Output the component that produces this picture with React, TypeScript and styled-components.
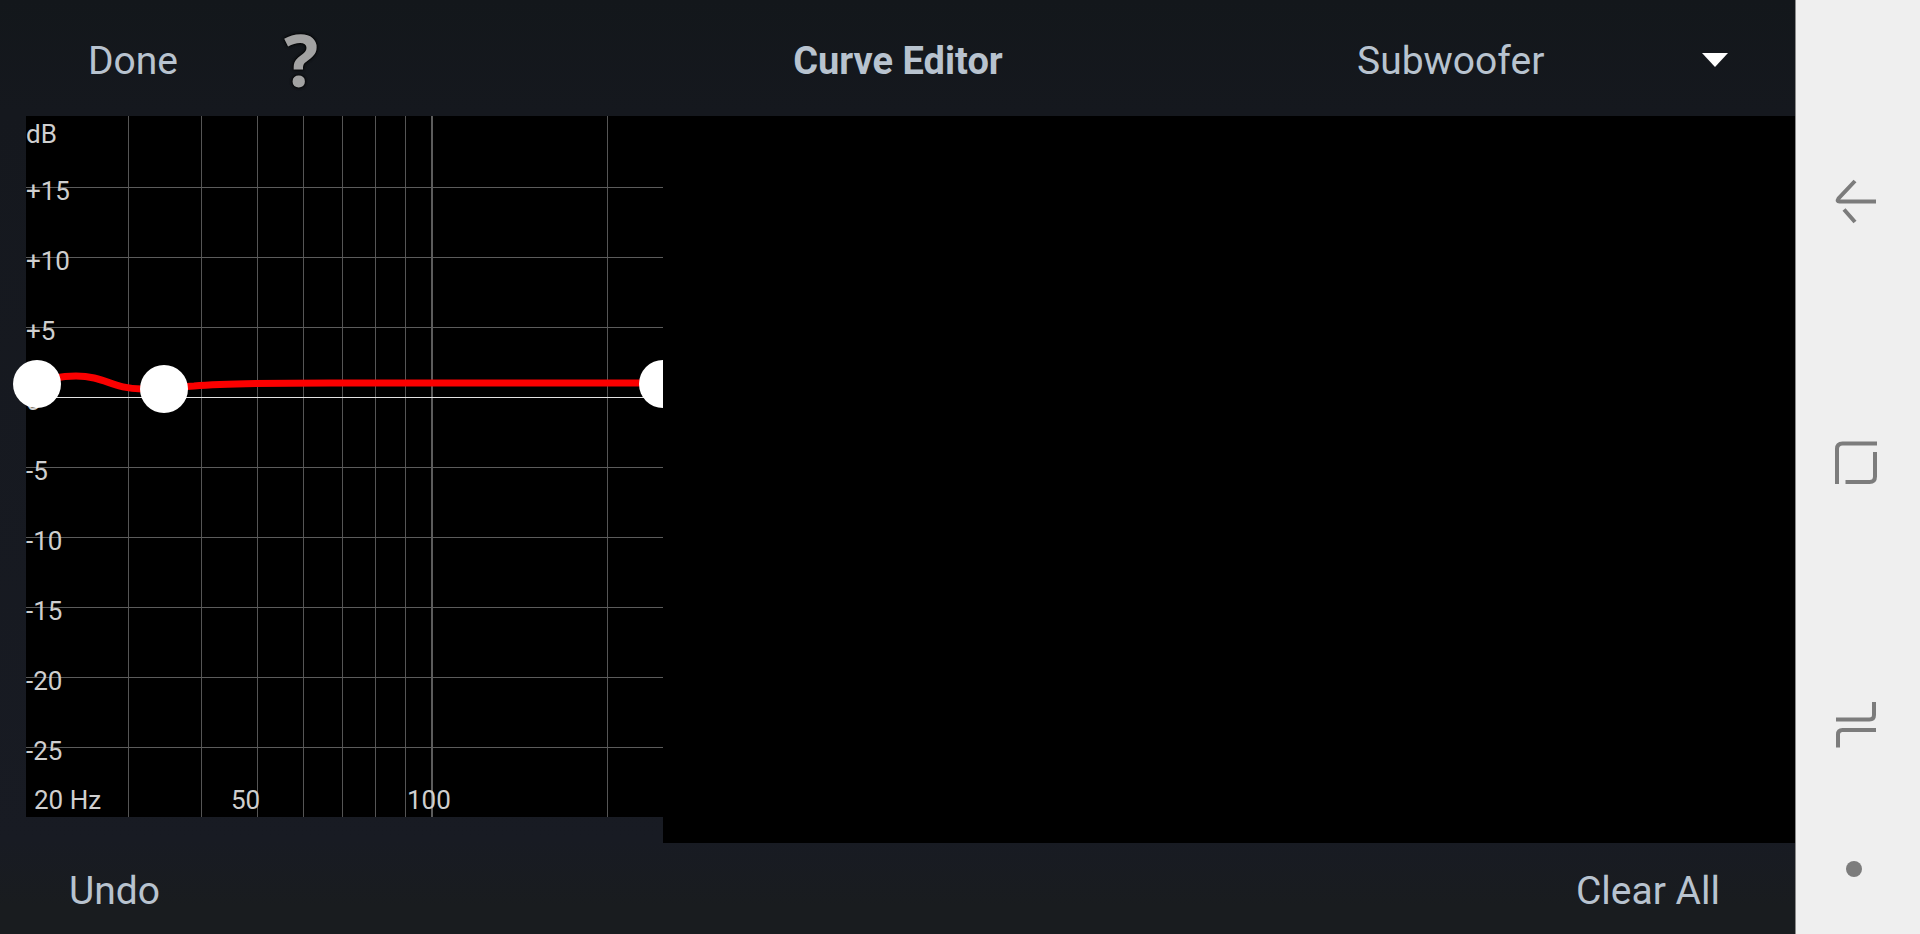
import React, { useState } from "react";
import styled, { createGlobalStyle } from "styled-components";

const GlobalStyle = createGlobalStyle`
  * { box-sizing: border-box; }
  body {
    margin: 0;
    background: #000;
    font-family: Roboto, "Liberation Sans", sans-serif;
  }
`;

const Screen = styled.div`
  display: flex;
  min-height: 100vh;
`;

const Editor = styled.div`
  flex: 1;
  min-width: 0;
  display: flex;
  flex-direction: column;
  background: linear-gradient(#13171b, #15181e 12%, #181b23 90%, #191c1f 97%);
`;

const TopBar = styled.header`
  height: 116px;
  padding: 5px 67px 0 88px;
  display: grid;
  grid-template-columns: 1fr auto 1fr;
  align-items: center;
`;

const BarSide = styled.div<{ $end?: boolean }>`
  display: flex;
  align-items: center;
  justify-content: ${(p) => (p.$end ? "flex-end" : "flex-start")};
`;

const TextButton = styled.button`
  padding: 0;
  border: 0;
  background: none;
  color: #b8c3cf;
  font: 400 39px/48px Roboto, "Liberation Sans", sans-serif;
  cursor: pointer;
`;

const HelpButton = styled(TextButton)`
  margin-left: 106px;
  padding-bottom: 4px;
  color: #a2a2a2;
  font: 700 72px/72px "Open Sans", "Noto Sans", sans-serif;
  text-shadow: 0 0 3px #000, 0 0 3px #000;
`;

const Title = styled.h1`
  margin: 0 0 0 -20px;
  color: #b8c3cf;
  font-size: 38px;
  line-height: 48px;
  font-weight: 700;
`;

const SelectBox = styled.div`
  position: relative;
  width: 371px;
`;

const ChannelSelect = styled.select`
  appearance: none;
  display: block;
  width: 100%;
  padding: 0;
  border: 0;
  background: none;
  color: #b8c3cf;
  font: 400 39px/48px Roboto, "Liberation Sans", sans-serif;
`;

const Caret = styled.svg`
  position: absolute;
  right: 0;
  top: 16px;
  pointer-events: none;
`;

const Workspace = styled.main`
  flex: 1;
  display: flex;
`;

const PlotColumn = styled.div`
  width: 663px;
  padding-bottom: 26px;
`;

const Plot = styled.svg`
  display: block;
  font-size: 26px;
`;

const EmptyArea = styled.div`
  flex: 1;
  background: #000;
`;

const BottomBar = styled.footer`
  height: 91px;
  padding: 4px 75px 0 69px;
  display: flex;
  align-items: center;
  justify-content: space-between;
`;

const SystemNav = styled.nav`
  width: 125px;
  padding: 70px 0 52px;
  display: flex;
  flex-direction: column;
  background: #efefef;
  border-left: 1px solid #8b8b8b;
`;

const NavButton = styled.button<{ $small?: boolean }>`
  flex: ${(p) => (p.$small ? "0 0 26px" : "1")};
  padding: 0 4px 0 0;
  border: 0;
  background: none;
  display: flex;
  align-items: center;
  justify-content: center;
  color: #7c7c7c;
`;

const LEFT = 26;
const RIGHT = 663;
const levels = ["+15", "+10", "+5", "0", "-5", "-10", "-15", "-20", "-25"];
const frequencies = [128, 201, 257, 303, 342, 375, 405, 607];
const handles = [
  { x: 37, y: 268 },
  { x: 164, y: 273 },
  { x: 663, y: 268 },
];

function CurvePlot() {
  return (
    <Plot width="663" height="701" viewBox="0 0 663 701" role="img" aria-label="Target curve">
      <rect x={LEFT} width={RIGHT - LEFT} height="701" fill="#000" />
      <g shapeRendering="crispEdges">
        {frequencies.map((x) => (
          <rect key={x} x={x} width="1" height="701" fill="#555" />
        ))}
        <rect x="431" width="2" height="701" fill="#5c5c5c" />
        {levels.map((label, i) => (
          <rect
            key={label}
            x={LEFT}
            y={71 + i * 70}
            width={RIGHT - LEFT}
            height="1"
            fill={label === "0" ? "#e4e4e4" : "#5c5c5c"}
          />
        ))}
      </g>
      <g fill="#cfcfcf">
        <text x={LEFT} y="27">dB</text>
        {levels.map((label, i) => (
          <text key={label} x={LEFT} y={84 + i * 70}>{label}</text>
        ))}
        <text x="34" y="693">20 Hz</text>
        <text x="231" y="693">50</text>
        <text x="407" y="693">100</text>
      </g>
      <path
        d="M37 268C49 262 62 260 76 260C105 260 112 273 142 273C160 273 176 271 194 270C230 267 275 267 330 267C430 266 530 267 663 267"
        fill="none"
        stroke="#fb0000"
        strokeWidth="7"
      />
      {handles.map((h) => (
        <circle key={h.x} cx={h.x} cy={h.y} r="24" fill="#fff" />
      ))}
    </Plot>
  );
}

function NavIcon({ d }: { d: string }) {
  return (
    <svg width="48" height="48" viewBox="0 0 48 48" fill="none" stroke="currentColor" strokeWidth="4">
      <path d={d} />
    </svg>
  );
}

export default function App() {
  const [channel, setChannel] = useState("Subwoofer");
  return (
    <>
      <GlobalStyle />
      <Screen>
        <Editor>
          <TopBar>
            <BarSide>
              <TextButton type="button">Done</TextButton>
              <HelpButton type="button" aria-label="Help">?</HelpButton>
            </BarSide>
            <Title>Curve Editor</Title>
            <BarSide $end>
              <SelectBox>
                <ChannelSelect
                  aria-label="Channel"
                  value={channel}
                  onChange={(e) => setChannel(e.target.value)}
                >
                  <option>Subwoofer</option>
                </ChannelSelect>
                <Caret width="26" height="14" viewBox="0 0 26 14" aria-hidden="true">
                  <path d="M0 0H26L13 14Z" fill="#fff" />
                </Caret>
              </SelectBox>
            </BarSide>
          </TopBar>
          <Workspace>
            <PlotColumn>
              <CurvePlot />
            </PlotColumn>
            <EmptyArea />
          </Workspace>
          <BottomBar>
            <TextButton type="button">Undo</TextButton>
            <TextButton type="button">Clear All</TextButton>
          </BottomBar>
        </Editor>
        <SystemNav aria-label="System">
          <NavButton type="button" aria-label="Back">
            <NavIcon d="M44 24.5H7.500Q4.500 24.500 6.500 21.500L23 4M12 32.500L23 45" />
          </NavButton>
          <NavButton type="button" aria-label="Home">
            <NavIcon d="M5 45V10Q5 4.500 10.500 4.500H45M43 13V37.500Q43 43 37.500 43H13.500" />
          </NavButton>
          <NavButton type="button" aria-label="Recent apps">
            <NavIcon d="M4 18.500H37.500Q42 18.500 42 14V1M44 29H10.500Q6 29 6 33.500V46.500" />
          </NavButton>
          <NavButton type="button" aria-label="Hide navigation bar" $small>
            <svg width="20" height="16" viewBox="0 0 20 16">
              <circle cx="8" cy="8" r="8" fill="currentColor" />
            </svg>
          </NavButton>
        </SystemNav>
      </Screen>
    </>
  );
}
